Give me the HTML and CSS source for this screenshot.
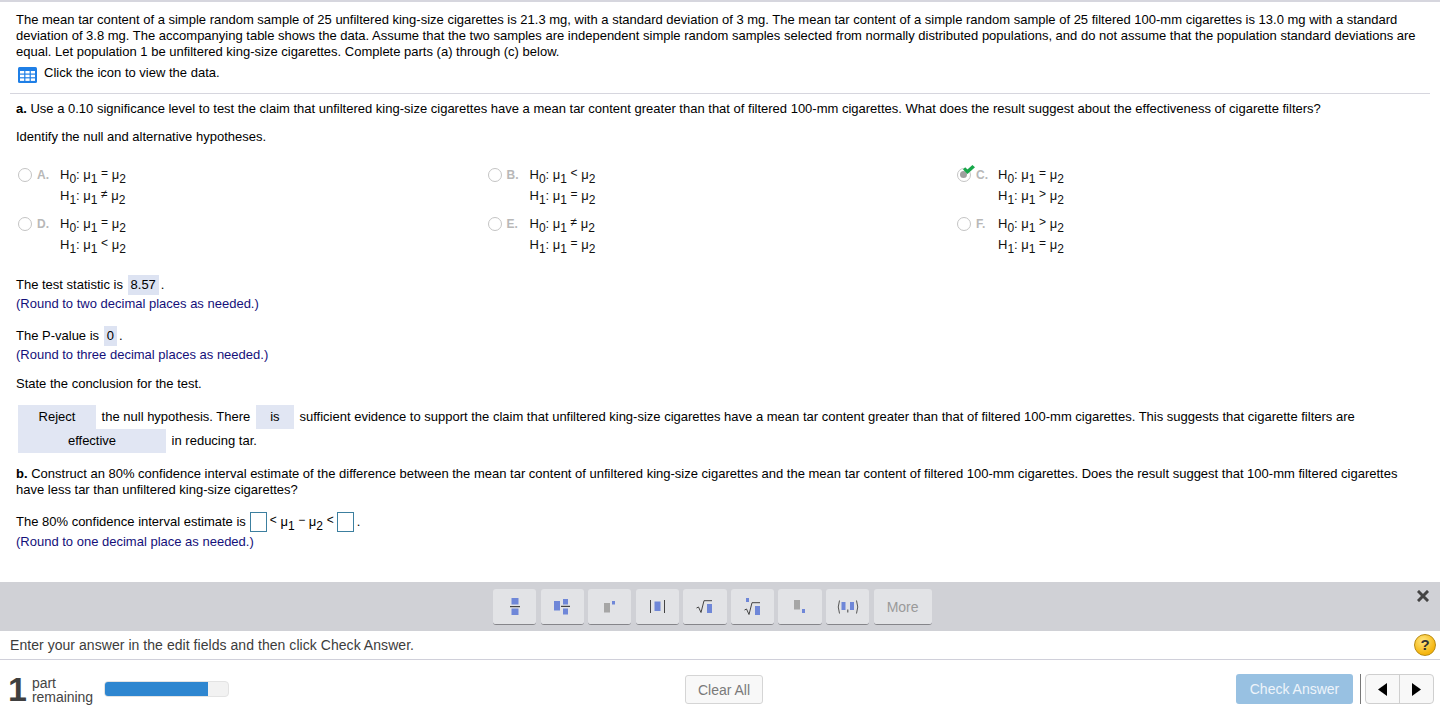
FILE: index.html
```html
<!DOCTYPE html>
<html lang="en">
<head>
<meta charset="utf-8">
<title>Question</title>
<link rel="stylesheet" href="styles.css">
</head>
<body>
<div class="page">
<main class="main">
  <section class="stem">
    <p class="stem-text">The mean tar content of a simple random sample of 25 unfiltered king-size cigarettes is 21.3 mg, with a standard deviation of 3 mg. The mean tar content of a simple random sample of 25 filtered 100-mm cigarettes is 13.0 mg with a standard deviation of 3.8 mg. The accompanying table shows the data. Assume that the two samples are independent simple random samples selected from normally distributed populations, and do not assume that the population standard deviations are equal. Let population 1 be unfiltered king-size cigarettes. Complete parts (a) through (c) below.</p>
    <div class="data-link">
      <svg class="data-icon" width="19" height="16" viewBox="0 0 19 16"><rect width="19" height="16" rx="1.5" fill="#1f7fe6"/><g fill="#fff"><rect x="2" y="4" width="4.200" height="2.500"/><rect x="7.400" y="4" width="4.200" height="2.500"/><rect x="12.800" y="4" width="4.200" height="2.500"/><rect x="2" y="7.700" width="4.200" height="2.500"/><rect x="7.400" y="7.700" width="4.200" height="2.500"/><rect x="12.800" y="7.700" width="4.200" height="2.500"/><rect x="2" y="11.400" width="4.200" height="2.500"/><rect x="7.400" y="11.400" width="4.200" height="2.500"/><rect x="12.800" y="11.400" width="4.200" height="2.500"/></g></svg>
      <span>Click the icon to view the data.</span>
    </div>
  </section>
  <section class="part-a">
    <p class="line"><b>a.</b> Use a 0.10 significance level to test the claim that unfiltered king-size cigarettes have a mean tar content greater than that of filtered 100-mm cigarettes. What does the result suggest about the effectiveness of cigarette filters?</p>
    <p class="line identify">Identify the null and alternative hypotheses.</p>
    <div class="options">
      <div class="option"><span class="radio"></span><span class="letter">A.</span><div class="formula"><div>H<sub>0</sub>: μ<sub>1</sub> <i>=</i> μ<sub>2</sub></div><div>H<sub>1</sub>: μ<sub>1</sub> <i>≠</i> μ<sub>2</sub></div></div></div>
      <div class="option"><span class="radio"></span><span class="letter">B.</span><div class="formula"><div>H<sub>0</sub>: μ<sub>1</sub> <i>&lt;</i> μ<sub>2</sub></div><div>H<sub>1</sub>: μ<sub>1</sub> <i>=</i> μ<sub>2</sub></div></div></div>
      <div class="option"><span class="radio radio-on"><svg class="tick" width="12" height="9" viewBox="0 0 12 9"><path d="M0 4.500 L2.200 2.300 L4.400 4.400 L9.400 0 L12 2.200 L4.500 9 Z" fill="#17a84a"/></svg></span><span class="letter letter-c">C.</span><div class="formula"><div>H<sub>0</sub>: μ<sub>1</sub> <i>=</i> μ<sub>2</sub></div><div>H<sub>1</sub>: μ<sub>1</sub> <i>&gt;</i> μ<sub>2</sub></div></div></div>
      <div class="option"><span class="radio"></span><span class="letter">D.</span><div class="formula"><div>H<sub>0</sub>: μ<sub>1</sub> <i>=</i> μ<sub>2</sub></div><div>H<sub>1</sub>: μ<sub>1</sub> <i>&lt;</i> μ<sub>2</sub></div></div></div>
      <div class="option"><span class="radio"></span><span class="letter">E.</span><div class="formula"><div>H<sub>0</sub>: μ<sub>1</sub> <i>≠</i> μ<sub>2</sub></div><div>H<sub>1</sub>: μ<sub>1</sub> <i>=</i> μ<sub>2</sub></div></div></div>
      <div class="option"><span class="radio"></span><span class="letter letter-c">F.</span><div class="formula"><div>H<sub>0</sub>: μ<sub>1</sub> <i>&gt;</i> μ<sub>2</sub></div><div>H<sub>1</sub>: μ<sub>1</sub> <i>=</i> μ<sub>2</sub></div></div></div>
    </div>
    <div class="answer-block stat">
      <p class="answer-line">The test statistic is <span class="filled">8.57</span>.</p>
      <p class="hint">(Round to two decimal places as needed.)</p>
    </div>
    <div class="answer-block pval">
      <p class="answer-line">The P-value is <span class="filled">0</span>.</p>
      <p class="hint">(Round to three decimal places as needed.)</p>
    </div>
    <p class="line state">State the conclusion for the test.</p>
    <p class="conclusion"><span class="pick pick-reject">Reject</span> the null hypothesis. There <span class="pick pick-is">is</span> sufficient evidence to support the claim that unfiltered king-size cigarettes have a mean tar content greater than that of filtered 100-mm cigarettes. This suggests that cigarette filters are <span class="pick pick-effective">effective</span> in reducing tar.</p>
  </section>
  <section class="part-b">
    <p class="stem-text"><b>b.</b> Construct an 80% confidence interval estimate of the difference between the mean tar content of unfiltered king-size cigarettes and the mean tar content of filtered 100-mm cigarettes. Does the result suggest that 100-mm filtered cigarettes have less tar than unfiltered king-size cigarettes?</p>
    <div class="interval">
      <span>The 80% confidence interval estimate is</span><span class="box"></span><span class="expr"><i>&lt;</i> μ<sub>1</sub> <i>−</i> μ<sub>2</sub> <i>&lt;</i></span><span class="box box-last"></span><span>.</span>
    </div>
    <p class="hint">(Round to one decimal place as needed.)</p>
  </section>
</main>

<div class="palette">
  <div class="tools">
    <button class="tool"><svg width="10" height="17" viewBox="0 0 10 17"><rect x="1.500" y="0" width="7" height="6.500" fill="#6f87d8"/><rect x="0" y="8" width="10" height="1.200" fill="#444"/><rect x="1.500" y="10.500" width="7" height="6.500" fill="#6f87d8"/></svg></button>
    <button class="tool"><svg width="17" height="16" viewBox="0 0 17 16"><rect x="0" y="2" width="6" height="9.500" fill="#6f87d8"/><rect x="9" y="0" width="5" height="5.500" fill="#6f87d8"/><rect x="7" y="6.800" width="9" height="1.200" fill="#444"/><rect x="9" y="9.500" width="5" height="6" fill="#6f87d8"/></svg></button>
    <button class="tool"><svg width="12" height="12" viewBox="0 0 12 12"><rect x="0" y="2" width="6" height="9.500" fill="#a6a6a6"/><rect x="8" y="0" width="3" height="3.500" fill="#6f87d8"/></svg></button>
    <button class="tool"><svg width="15" height="13" viewBox="0 0 15 13"><rect x="0" y="0" width="1" height="13" fill="#444"/><rect x="4.500" y="1.500" width="6" height="9.500" fill="#6f87d8"/><rect x="14" y="0" width="1" height="13" fill="#444"/></svg></button>
    <button class="tool"><svg width="17" height="14" viewBox="0 0 17 14"><path d="M0.500 8 L2.500 7 L5 12.500 L8 0.700 L16 0.700" fill="none" stroke="#444" stroke-width="1"/><rect x="11" y="4" width="5" height="9" fill="#6f87d8"/></svg></button>
    <button class="tool"><svg width="17" height="18" viewBox="0 0 17 18"><rect x="2" y="0" width="3" height="4" fill="#6f87d8"/><path d="M0.500 12 L2.500 11 L5 16.500 L8 4.700 L16 4.700" fill="none" stroke="#444" stroke-width="1"/><rect x="11" y="8" width="5" height="9" fill="#6f87d8"/></svg></button>
    <button class="tool"><svg width="12" height="13" viewBox="0 0 12 13"><rect x="0" y="0" width="6" height="9.500" fill="#a6a6a6"/><rect x="8" y="9" width="3" height="4" fill="#6f87d8"/></svg></button>
    <button class="tool"><svg width="22" height="14" viewBox="0 0 22 14"><path d="M2.500 0.500 Q0 7 2.500 13.500 M19.500 0.500 Q22 7 19.500 13.500" fill="none" stroke="#555" stroke-width="1"/><rect x="4.500" y="2" width="4" height="8" fill="#6f87d8"/><rect x="13" y="2" width="4" height="8" fill="#6f87d8"/><rect x="10.300" y="9.500" width="1" height="3" fill="#444"/></svg></button>
    <button class="tool tool-more">More</button>
  </div>
  <svg class="close" width="12" height="12" viewBox="0 0 12 12"><path d="M2 2 L10 10 M10 2 L2 10" stroke="#444" stroke-width="3" stroke-linecap="square"/></svg>
</div>

<div class="instruction">
  <span>Enter your answer in the edit fields and then click Check Answer.</span>
  <span class="help">?</span>
</div>

<footer class="footer">
  <div class="remaining">
    <span class="count">1</span>
    <span class="count-label">part<br>remaining</span>
    <div class="progress"><div class="progress-fill"></div></div>
  </div>
  <button class="clear">Clear All</button>
  <div class="actions">
    <button class="check-btn">Check Answer</button>
    <span class="sep"></span>
    <div class="nav">
      <button class="nav-btn"><svg width="9" height="13" viewBox="0 0 9 13"><path d="M9 0 V13 L0 6.500 Z" fill="#000"/></svg></button>
      <button class="nav-btn"><svg width="9" height="13" viewBox="0 0 9 13"><path d="M0 0 V13 L9 6.500 Z" fill="#000"/></svg></button>
    </div>
  </div>
</footer>
</div>
</body>
</html>
```

FILE: styles.css
```css
* { box-sizing: border-box; }
html, body { margin: 0; padding: 0; background: #fff; }
body { font-family: "Liberation Sans", Arial, sans-serif; font-size: 13px; line-height: 16px; color: #000; }
p { margin: 0; }
button { font-family: inherit; cursor: default; }
.page { height: 719px; display: flex; flex-direction: column; overflow: hidden; border-top: 2px solid #d6d6de; }
.main { height: 580px; }
.stem { padding: 10px 16px 0; }
.stem-text { width: 1400px; }
.data-link { display: flex; align-items: center; gap: 7px; padding: 2px 0 0 2px; height: 24px; }
.data-icon { flex: none; margin-top: 3px; }
.part-a { margin: 9px 10px 0; border-top: 1px solid #d6d6de; padding: 7px 0 0 6px; }
.line { height: 16px; }
.identify { margin-top: 12px; }
.options { display: grid; grid-template-columns: 469.5px 469.5px 470px; row-gap: 8px; margin: 22px 0 0 2px; }
.option { display: flex; align-items: flex-start; height: 41px; }
.radio { position: relative; flex: none; width: 14px; height: 14px; border: 1.5px solid #c4c4c4; border-radius: 50%; background: #fff; margin-top: 1px; }
.radio-on::after { content: ""; position: absolute; left: 2px; top: 2px; width: 7px; height: 7px; border-radius: 50%; background: #a0a0a0; }
.tick { position: absolute; left: 5px; top: -4px; z-index: 1; }
.letter { flex: none; width: 23px; margin-left: 5px; font-size: 12px; font-weight: bold; color: #b8b8b8; line-height: 16px; }
.letter-c { width: 22px; margin-left: 5px; }
.formula { font-size: 13px; line-height: 20.500px; margin-top: -2px; color: #111; }
.formula sub, .expr sub { font-size: 12px; line-height: 0; vertical-align: -4px; }
.formula i, .expr i { font-style: normal; font-size: 12px; position: relative; top: -2px; }
.answer-block .hint { margin-top: 3px; }
.stat { margin-top: 20px; }
.pval { margin-top: 16px; }
.answer-line { height: 16px; }
.filled { display: inline-block; background: #dde3f2; padding: 2px 3px; margin: -2px 2px -2px 1px; line-height: 16px; }
.hint { color: #14107a; height: 16px; }
.state { margin-top: 13px; }
.conclusion { margin: 13px 0 0 2px; width: 1350px; line-height: 24px; }
.pick { display: inline-block; height: 24px; text-align: center; background: #e1e6f3; margin-right: 2px; }
.pick-reject { width: 78px; }
.pick-is { width: 38px; margin-left: 2px; }
.pick-effective { width: 148px; }
.part-b { margin: 13px 0 0 16px; }
.interval { display: flex; align-items: center; height: 20px; margin-top: 14px; }
.box { width: 17px; height: 20px; border: 1.5px solid #3c7f9f; background: #fff; margin-left: 4px; margin-right: 3px; }
.box-last { margin-left: 3px; }
.part-b .hint { margin-top: 2px; }
.palette { position: relative; height: 49px; background: #d0d1d6; display: flex; padding: 7px 0 0 493px; }
.tools { display: flex; gap: 4.400px; height: 36px; }
.tool { width: 43.200px; height: 36px; padding: 0; display: flex; align-items: center; justify-content: center; background: #e2e3e6; border: 0; border-bottom: 1px solid #85858a; border-radius: 3px; }
.tool-more { width: 58px; font-size: 14px; color: #9a9a9a; }
.close { position: absolute; right: 11px; top: 8px; }
.instruction { height: 29px; border-bottom: 1px solid #d0d0da; display: flex; align-items: center; justify-content: space-between; padding: 0 4px 0 10px; font-size: 14px; letter-spacing: 0.050px; color: #3c3c3c; }
.help { width: 22px; height: 22px; border-radius: 50%; border: 1px solid #b88a10; background: radial-gradient(circle at 40% 30%, #ffe680, #f5b50e 70%); font-weight: bold; font-size: 15px; line-height: 20px; text-align: center; color: #333; }
.footer { flex: 1; display: flex; align-items: flex-start; padding: 14px 6px 0 8px; }
.remaining { display: flex; align-items: flex-start; width: 677px; color: #444; }
.count { font-size: 34px; font-weight: bold; line-height: 30px; width: 24px; color: #3f3f3f; }
.count-label { width: 72px; font-size: 14px; line-height: 14px; margin-top: 2px; letter-spacing: -0.050px; }
.progress { width: 125px; height: 16px; margin-top: 7px; border: 1px solid #e3e3e3; border-radius: 4px; background: #f2f2f2; overflow: hidden; }
.progress-fill { width: 104px; height: 16px; margin: -1px; background: #2e86d0; }
.clear { width: 78px; height: 29px; margin-top: 1px; font-size: 14px; color: #7a7a7a; background: #f8f8f8; border: 1px solid #d5d5d5; border-radius: 3px; padding: 0; }
.actions { margin-left: auto; display: flex; align-items: flex-start; }
.check-btn { width: 117px; height: 30px; font-size: 14px; color: #eef4fa; background: #98c1e2; border: 0; border-radius: 3px; padding: 0; }
.sep { width: 1px; height: 30px; background: #777; margin: 0 4px 0 7px; }
.nav { display: flex; width: 69px; height: 30px; border: 1px solid #cfcfcf; border-radius: 4px; background: #f8f8f8; }
.nav-btn { flex: 1; border: 0; background: none; padding: 0; display: flex; align-items: center; justify-content: center; }
.nav-btn + .nav-btn { border-left: 1px solid #cfcfcf; }
```
